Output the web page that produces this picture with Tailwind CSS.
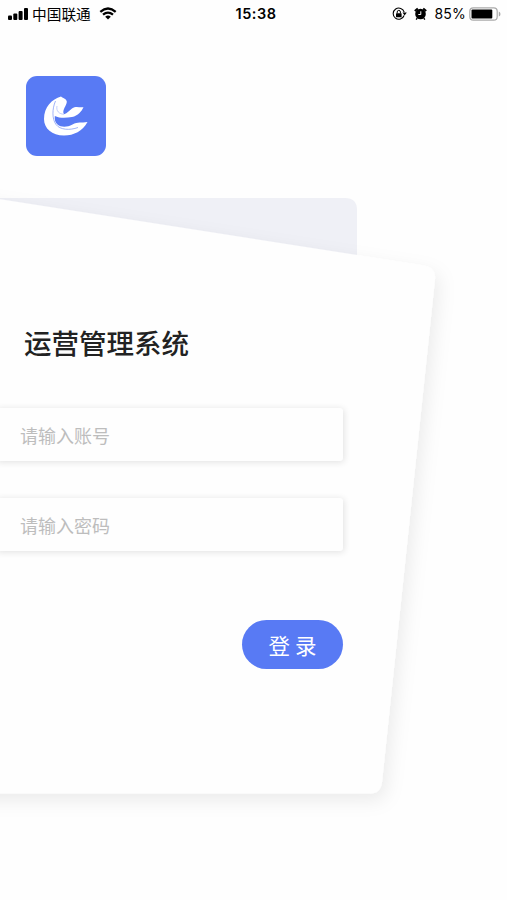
<!DOCTYPE html>
<html lang="zh-CN">
<head>
<meta charset="UTF-8">
<meta name="viewport" content="width=device-width, initial-scale=1">
<title>运营管理系统</title>
<script src="https://cdn.jsdelivr.net/npm/@tailwindcss/browser@4"></script>
</head>
<body class="bg-white font-['Liberation_Sans','Noto_Sans_CJK_SC',sans-serif]">
<div class="relative isolate h-[900px] w-[507px] overflow-hidden bg-[#fefefe]">
  <!-- Layered card backdrop -->
  <svg class="absolute inset-0 -z-10" width="507" height="900" viewBox="0 0 507 900" aria-hidden="true">
    <defs>
      <filter id="shadow" x="-20%" y="-20%" width="140%" height="140%">
        <feDropShadow dx="4" dy="7" stdDeviation="9" flood-color="#000" flood-opacity="0.075"/>
      </filter>
    </defs>
    <path d="M-10 198H345Q357 198 357 210V300H-10Z" fill="#eff0f6"/>
    <path d="M-40 193L424 265.500Q436 267.500 435 279L382 782Q380.500 793.500 370 793.500H-40Z" fill="#fefefe" filter="url(#shadow)"/>
  </svg>

  <header class="grid h-7 grid-cols-3 items-center pl-2 pr-[6px] text-black">
    <div class="flex items-center">
      <svg width="20" height="12" viewBox="0 0 20 12">
        <rect x="0" y="7.500" width="4" height="4.500" rx="1"/><rect x="5.300" y="5.500" width="4" height="6.500" rx="1"/><rect x="10.600" y="3" width="4" height="9" rx="1"/><rect x="16" y="0" width="4" height="12" rx="1"/>
      </svg>
      <span class="ml-1 whitespace-nowrap font-['Noto_Sans_CJK_SC'] text-[14.700px] leading-7">中国联通</span>
      <svg class="-mt-0.5 ml-2" width="18" height="13" viewBox="0 0 18 13">
        <path d="M1.300 4.800Q9-1.800 16.700 4.800M4 7.700Q9 3.500 14 7.700" fill="none" stroke="#000" stroke-width="2.300"/>
        <path d="M9 12.500L6.200 9.800Q9 7.400 11.800 9.800Z"/>
      </svg>
    </div>
    <div class="pl-[3px] text-center font-['Inter'] text-[14.500px] font-semibold leading-7 tracking-[0.500px]">15:38</div>
    <div class="flex items-center justify-end">
      <svg width="15" height="14" viewBox="0 0 15 14">
        <path d="M12.100 8.500A5.600 5.600 0 1 1 12.200 5.200" fill="none" stroke="#000" stroke-width="1.100"/>
        <path d="M10.500 5.600H14.800L12.600 8.600Z"/>
        <rect x="4" y="6.200" width="5.600" height="4" rx=".5"/>
        <path d="M5.200 6.400V5a1.600 1.600 0 0 1 3.200 0V6.400" fill="none" stroke="#000" stroke-width="1"/>
      </svg>
      <svg class="ml-[7px]" width="13" height="14" viewBox="0 0 13 14">
        <circle cx="6.500" cy="7" r="5.300"/>
        <path d="M.8 4L3.800 1.400M12.200 4L9.200 1.400" stroke="#000" stroke-width="2"/>
        <path d="M3.200 11L2.200 12.600M9.800 11L10.800 12.600" stroke="#000" stroke-width="1.400"/>
        <path d="M6.800 4.300V7.500H4.300" fill="none" stroke="#fff" stroke-width="1"/>
      </svg>
      <span class="ml-[7px] font-['Inter'] text-[14px] leading-7 tracking-[0.200px]">85%</span>
      <svg class="ml-[3px]" width="32" height="14" viewBox="0 0 32 14">
        <rect x=".8" y=".8" width="27.400" height="12.400" rx="3.500" fill="#fff" stroke="#aaa" stroke-width="1.200"/>
        <rect x="2.500" y="2.600" width="20.800" height="8.800" rx="1"/>
        <path d="M29.800 4.500Q31.500 5 31.500 7T29.800 9.500Z" fill="#aaa"/>
      </svg>
    </div>
  </header>

  <main>
    <div class="ml-[26px] mt-12 flex h-20 w-20 items-center justify-center rounded-[11px] bg-[#587af4]">
      <svg width="80" height="80" viewBox="0 0 80 80" aria-label="logo">
        <path d="M35 20.500C26 23 18 31 18 43C18 52.500 26 59.500 38 59.500C48 59.500 56.500 55 61.500 46C55 47.300 52 45.500 46.500 48.500C41 51.500 35 51.500 31.500 48.500C29 46.500 28.500 43.500 28.800 40C34 42.500 40 42 46 41C52 39.500 55.500 35.500 57.500 31.200C53 32 50.500 29.500 46 32.500C43 34.500 41.500 37.500 38 38.300C35.500 34 41 29.500 40.800 25.500C40.500 23 37.500 22.500 35 20.500Z" fill="#fff"/>
        <path d="M29.500 25C26 33 26 43 30 48.500C34 54 44 54.500 52 51.500" fill="none" stroke="#7893f5" stroke-width=".7"/>
        <path d="M31 30C30 35 33 38 38 38.300" fill="none" stroke="#9aaff8" stroke-width=".6"/>
      </svg>
    </div>

    <h1 class="ml-6 mt-[166px] font-['Noto_Sans_CJK_SC'] text-[27.500px] font-medium leading-[40px] text-[#222]">运营管理系统</h1>

    <form class="mt-[46px] flex w-[343px] flex-col">
      <div class="-ml-1 flex h-[53px] items-center rounded-[3px] bg-[#fefefe] pl-6 pt-0.5 shadow-[1px_1px_7px_rgba(0,0,0,0.12)]">
        <input type="text" placeholder="请输入账号" class="w-full bg-transparent font-['Noto_Sans_CJK_SC'] text-[18px] outline-none placeholder:text-[#bdbdbd]">
      </div>
      <div class="-ml-1 mt-[37px] flex h-[53px] items-center rounded-[3px] bg-[#fefefe] pl-6 pt-0.5 shadow-[1px_1px_7px_rgba(0,0,0,0.12)]">
        <input type="password" placeholder="请输入密码" class="w-full bg-transparent font-['Noto_Sans_CJK_SC'] text-[18px] outline-none placeholder:text-[#bdbdbd]">
      </div>
      <button type="button" class="mt-[69px] h-[49px] w-[101px] self-end rounded-full bg-[#587af4] font-['Noto_Sans_CJK_SC'] text-[21.500px] leading-[49px] text-white">登 录</button>
    </form>
  </main>
</div>
</body>
</html>
